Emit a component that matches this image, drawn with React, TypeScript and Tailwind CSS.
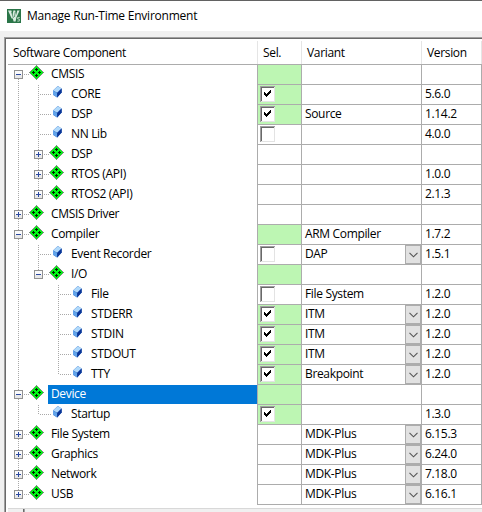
import React from "react";

type Row = {
  name: string;
  level: number;
  toggle?: "+" | "-";
  last?: boolean;
  green?: boolean;
  check?: boolean;
  variant?: string;
  drop?: boolean;
  version?: string;
  selected?: boolean;
};

const rows: Row[] = [
  { name: "CMSIS", level: 0, toggle: "-", green: true },
  { name: "CORE", level: 1, green: true, check: true, version: "5.6.0" },
  { name: "DSP", level: 1, green: true, check: true, variant: "Source", version: "1.14.2" },
  { name: "NN Lib", level: 1, check: false, version: "4.0.0" },
  { name: "DSP", level: 1, toggle: "+" },
  { name: "RTOS (API)", level: 1, toggle: "+", version: "1.0.0" },
  { name: "RTOS2 (API)", level: 1, toggle: "+", last: true, version: "2.1.3" },
  { name: "CMSIS Driver", level: 0, toggle: "+" },
  { name: "Compiler", level: 0, toggle: "-", green: true, variant: "ARM Compiler", version: "1.7.2" },
  { name: "Event Recorder", level: 1, check: false, variant: "DAP", drop: true, version: "1.5.1" },
  { name: "I/O", level: 1, toggle: "-", last: true, green: true },
  { name: "File", level: 2, check: false, variant: "File System", version: "1.2.0" },
  { name: "STDERR", level: 2, green: true, check: true, variant: "ITM", drop: true, version: "1.2.0" },
  { name: "STDIN", level: 2, green: true, check: true, variant: "ITM", drop: true, version: "1.2.0" },
  { name: "STDOUT", level: 2, green: true, check: true, variant: "ITM", drop: true, version: "1.2.0" },
  { name: "TTY", level: 2, last: true, green: true, check: true, variant: "Breakpoint", drop: true, version: "1.2.0" },
  { name: "Device", level: 0, toggle: "-", green: true, selected: true },
  { name: "Startup", level: 1, last: true, green: true, check: true, version: "1.3.0" },
  { name: "File System", level: 0, toggle: "+", variant: "MDK-Plus", drop: true, version: "6.15.3" },
  { name: "Graphics", level: 0, toggle: "+", variant: "MDK-Plus", drop: true, version: "6.24.0" },
  { name: "Network", level: 0, toggle: "+", variant: "MDK-Plus", drop: true, version: "7.18.0" },
  { name: "USB", level: 0, toggle: "+", last: true, variant: "MDK-Plus", drop: true, version: "6.16.1" },
];

function Dots({ x1, y1, x2, y2 }: { x1: number; y1: number; x2: number; y2: number }) {
  return <line x1={x1} y1={y1} x2={x2} y2={y2} stroke="#a8a8a8" strokeDasharray="1 1" />;
}

function Diamond({ x }: { x: number }) {
  return (
    <g transform={`translate(${x} 0)`} shapeRendering="crispEdges">
      <path d="M7 0h1v1h1v1h1v1h1v1h1v1h1v1h1v1h1v1h-1v1h-1v1h-1v1h-1v1h-1v1h-1v1h-1v1h-1v-1h-1v-1h-1v-1h-1v-1h-1v-1h-1v-1h-1v-1h-1v-1h1v-1h1v-1h1v-1h1v-1h1v-1h1v-1h1z" fill="#7c8c7c" />
      <path d="M7 1h1v1h1v1h1v1h1v1h1v1h1v1h1v1h-1v1h-1v1h-1v1h-1v1h-1v1h-1v1h-1v-1h-1v-1h-1v-1h-1v-1h-1v-1h-1v-1h-1v-1h1v-1h1v-1h1v-1h1v-1h1v-1h1z" fill="#00fa14" />
      <path d="M7 3h1v1h1v1h-1v1h-1v-1h-1v-1h1zM4 6h1v1h1v1h-1v1h-1v-1h-1v-1h1zM10 6h1v1h1v1h-1v1h-1v-1h-1v-1h1zM7 9h1v1h1v1h-1v1h-1v-1h-1v-1h1z" fill="#002000" />
    </g>
  );
}

function Leaf({ x }: { x: number }) {
  return (
    <g transform={`translate(${x} 1)`}>
      <path d="M0 4.5L4.8 0L8.6 2.6V6.6L4.2 11.5L0 8.8Z" fill="#1b55b4" />
      <path d="M0 4.5L4.8 0L8.6 2.6L4.2 6.8Z" fill="#b0d9fb" />
      <path d="M0 4.5L4.2 6.9V11.5L0 8.8Z" fill="#62a4ea" />
      <path d="M4.2 6.9L8.6 2.6V6.6L4.2 11.5Z" fill="#0a3596" />
    </g>
  );
}

function TreeArt({ row, first }: { row: Row; first: boolean }) {
  const o = row.level * 20;
  const vx = 12.5 + o;
  return (
    <svg width={45 + o} height="20" className="block shrink-0">
      {row.level > 0 && <Dots x1={12.5} y1={0} x2={12.5} y2={20} />}
      {!first && <Dots x1={vx} y1={0} x2={vx} y2={10} />}
      {!row.last && <Dots x1={vx} y1={10} x2={vx} y2={20} />}
      <Dots x1={row.toggle ? 18 + o : 14 + o} y1={9.5} x2={row.toggle ? 23 + o : 26 + o} y2={9.5} />
      {row.toggle && (
        <g shapeRendering="crispEdges">
          <rect x={8 + o} y="5" width="9" height="9" fill="#919191" />
          <rect x={9 + o} y="6" width="7" height="7" fill="#fafafa" />
          <rect x={9 + o} y="10" width="7" height="3" fill="#e8e8e8" />
          <rect x={10 + o} y="9" width="5" height="1" fill="#2b48a0" />
          {row.toggle === "+" && <rect x={12 + o} y="7" width="1" height="5" fill="#2b48a0" />}
        </g>
      )}
      {row.toggle ? <Diamond x={23 + o} /> : <Leaf x={27 + o} />}
    </svg>
  );
}

function Check({ on }: { on: boolean }) {
  return (
    <svg width="15" height="16" viewBox="0 0 15 16" className="ml-[2px] mt-px block" shapeRendering="crispEdges">
      <rect width="15" height="16" fill="#fff" />
      <path d="M0 0h15v1H1v15H0z" fill="#a0a0a0" />
      <path d="M1 1h13v1H2v13H1z" fill="#696969" />
      <path d="M14 1h1v15H1v-1h13z" fill="#e3e3e3" />
      {on && <path d="M4 6h1v1h1v1h1v-1h1v-1h1v-1h1v-1h1v3h-1v1h-1v1h-1v1h-1v1h-1v-1h-1v-1h-1z" fill="#000" />}
    </svg>
  );
}

export default function App() {
  return (
    <div className="flex h-[512px] w-[482px] flex-col overflow-hidden bg-[#f0f0f0] font-['Open_Sans','Noto_Sans',sans-serif] text-[12px] leading-[20px] tracking-[-0.34px] text-black">
      <div className="h-px shrink-0 bg-[#626262]" />
      <header className="flex h-[30px] shrink-0 items-center bg-white pl-[7px]">
        <svg width="14" height="14" viewBox="0 0 14 14" className="-mt-px">
          <rect width="14" height="14" fill="#2a7548" />
          <path d="M1 1.5h3.4l1 4.5l1-4.5h1.8l1 4.5l1-4.5h2.4L9.4 8.5L8.6 12.5H6.6L5.8 9.5L4.6 9.5z" fill="#d9eadf" />
          <path d="M4.6 3L6.4 9M8.2 3L7.5 8" fill="none" stroke="#2a7548" strokeWidth="0.7" />
          <path d="M12.8 8.4h-2.1v1.6h1.6v2.1h-2" fill="none" stroke="#c4dfcd" strokeWidth="0.9" />
        </svg>
        <h1 className="ml-[6px] tracking-[-0.23px] whitespace-nowrap">Manage Run-Time Environment</h1>
      </header>
      <div className="mt-[6px] ml-[4px] flex flex-1 flex-col border-t border-l border-[#a0a0a0]">
        <div className="flex flex-1 flex-col border-t border-l border-[#696969] bg-white">
          <div className="mt-[2px] ml-[2px] flex h-[23px] shrink-0 leading-[24px]">
            <div className="w-[250px] border-r border-[#e5e5e5] pl-[5px]">Software Component</div>
            <div className="w-[44px] border-r border-[#e5e5e5] pl-[5px]">Sel.</div>
            <div className="w-[120px] border-r border-[#e5e5e5] pl-[5px]">Variant</div>
            <div className="w-[60px] border-r border-[#e5e5e5] pl-[5px]">Version</div>
          </div>
          <div className="ml-[2px] h-px shrink-0 bg-[#acacac]" />
          {rows.map((r, i) => (
            <div key={i} className="flex h-[20px] shrink-0">
              <div className="flex w-[251px] overflow-hidden">
                <TreeArt row={r} first={i === 0} />
                <div className={r.selected ? "-ml-[3px] h-[19px] flex-1 bg-[#0078d7] pl-[3px] leading-[18px] text-white" : "leading-[18px]"}>
                  {r.name}
                </div>
              </div>
              <div className={r.green ? "w-[45px] border-x border-b border-[#acacac] bg-[#bdf6b3]" : "w-[45px] border-x border-b border-[#acacac] bg-white"}>
                {r.check !== undefined && <Check on={r.check} />}
              </div>
              <div className="flex w-[120px] justify-between border-r border-b border-[#acacac] pl-[3px] leading-[18px]">
                <span>{r.variant}</span>
                {r.drop && (
                  <span className="flex h-[19px] w-[16px] items-center justify-center border border-[#acacac] bg-[#e1e1e1]">
                    <svg width="9" height="6" viewBox="0 0 9 6">
                      <path d="M0.5 0.8L4.5 4.8L8.5 0.8" fill="none" stroke="#555" strokeWidth="1.1" />
                    </svg>
                  </span>
                )}
              </div>
              <div className="w-[60px] border-r border-b border-[#acacac] pl-[3px] leading-[18px]">{r.version}</div>
            </div>
          ))}
          <div className="mt-[3px] ml-[2px] flex flex-1 border-t border-[#d8d8d8] bg-[#f0f0f0]">
            <div className="w-[16px] border-r border-[#696969]" />
            <div className="flex-1 border-l border-[#a0a0a0]" />
          </div>
        </div>
      </div>
    </div>
  );
}
